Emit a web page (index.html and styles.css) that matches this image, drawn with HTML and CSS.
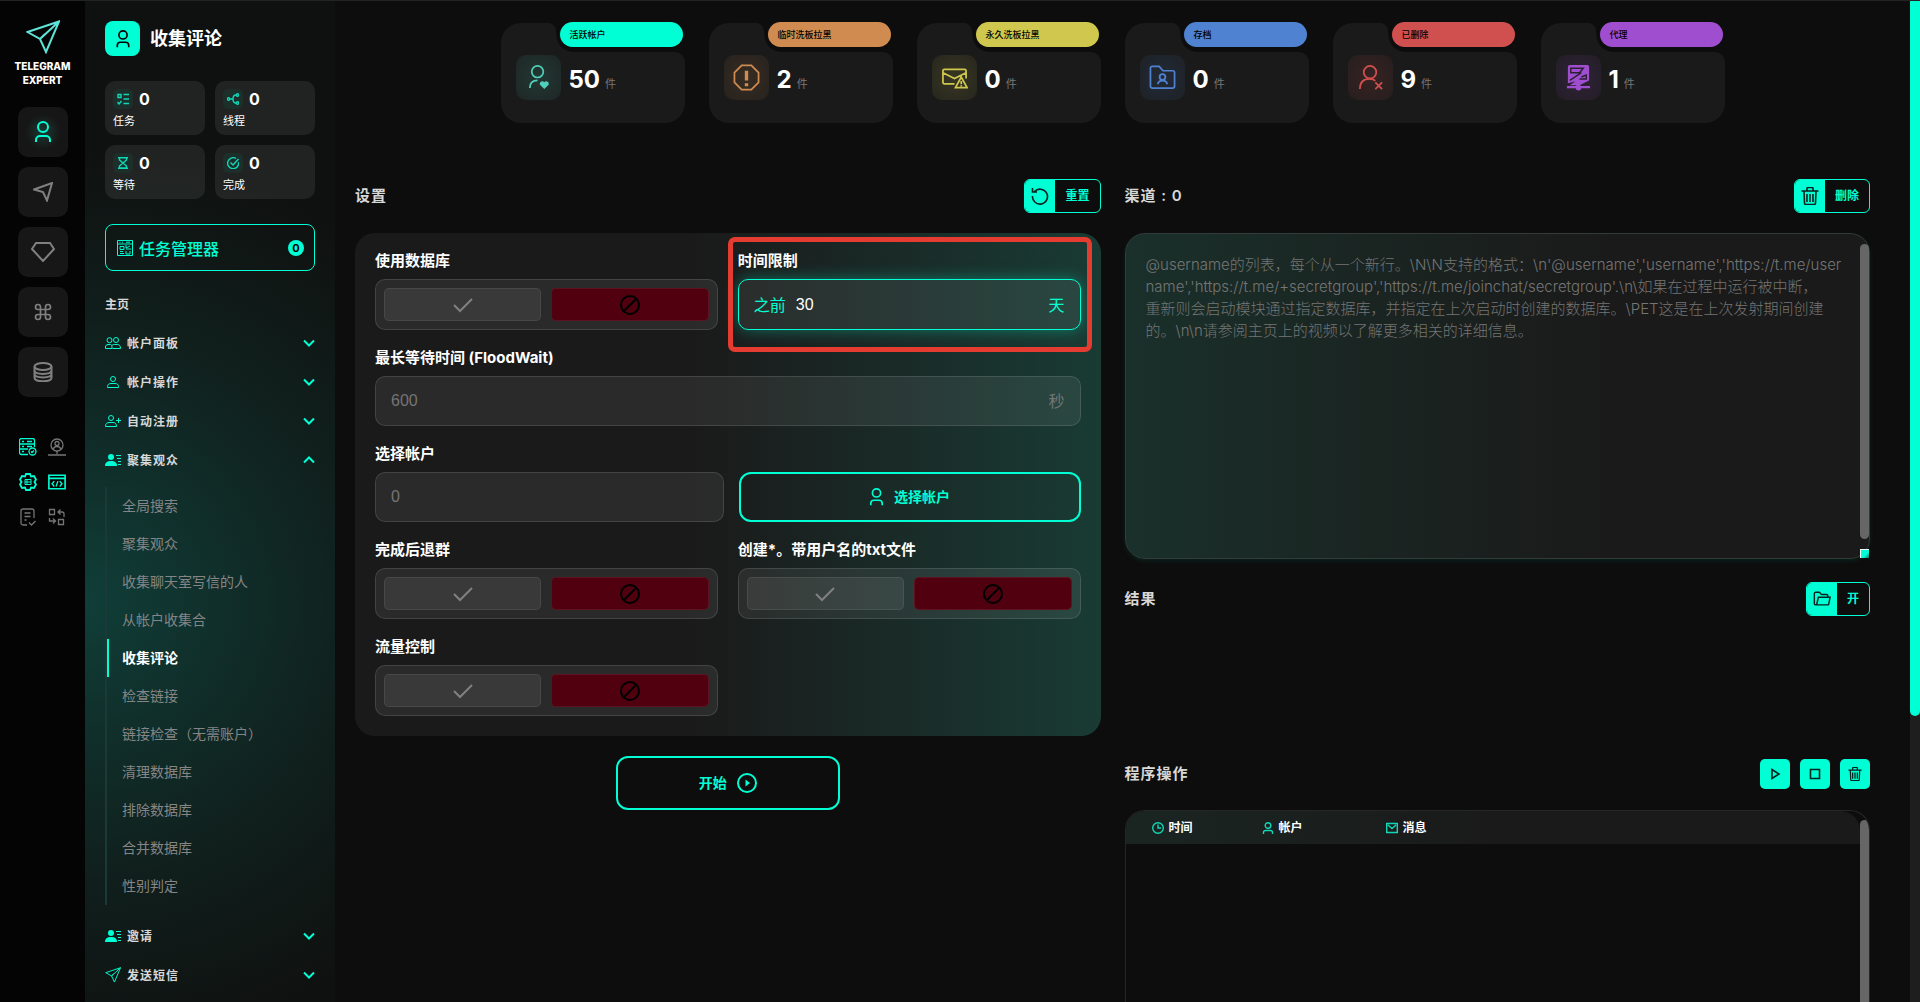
FILE: index.html
```html
<!DOCTYPE html>
<html lang="zh">
<head>
    <meta charset="UTF-8">
    <meta name="viewport" content="width=device-width, initial-scale=1.0">
    <title>收集评论</title>
    <link rel="stylesheet" href="styles.css">
</head>
<body>
    <svg class="sprite" aria-hidden="true">
        <symbol id="i-user" viewBox="0 0 16 22"><circle cx="8" cy="6" r="5"/><path d="M1 21v-2a4 4 0 0 1 4-4h6a4 4 0 0 1 4 4v2"/></symbol>
        <symbol id="i-user-sm" viewBox="0 0 16 12"><circle cx="8" cy="3" r="2.5"/><path d="M2.5 11.5v-1c0-2 1.500-3 3.500-3h4c2 0 3.500 1 3.500 3v1z"/></symbol>
        <symbol id="i-users" viewBox="0 0 16 12"><circle cx="4.500" cy="3.200" r="2.500"/><circle cx="11" cy="3" r="2.500"/><path d="M.5 11.500v-1.500c0-1.500 1-2.500 2.500-2.500h2.500c1 0 1.500 1 1.500 4zM7 8.500c1-1 1.500-1 2.500-1h3c2 0 3 1.500 3 4H7.500"/></symbol>
        <symbol id="i-user-plus" viewBox="0 0 16 12"><circle cx="6" cy="3" r="2.500"/><path d="M.5 11.500c0-3 1.500-4 3.500-4h4c2 0 3.500 1 3.500 4zM13.500 3v5M11 5.500h5"/></symbol>
        <symbol id="i-user-list" viewBox="0 0 16 12"><g fill="currentColor" stroke="none"><circle cx="6" cy="3" r="3"/><path d="M0 12c0-3.500 2-5 6-5s6 1.500 6 5z"/></g><path d="M11 1.500h5M12 4.500h4M13 7.500h3M13 10.500h3"/></symbol>
        <symbol id="i-plane" viewBox="0 0 34 34"><path d="M1.500 12L33 1.500 20 32l-6-13zM14 19L33 1.500M14 19l5-5"/></symbol>
        <symbol id="i-send" viewBox="0 0 20 20"><path d="M1 7.500L19 1l-5 17.500-4-8.500z"/></symbol>
        <symbol id="i-gem" viewBox="0 0 24 20"><path d="M5 1h14l4 6-11 12L1 7z"/></symbol>
        <symbol id="i-cmd" viewBox="0 0 24 24"><path d="M9 9h6v6H9zM9 9V6a3 3 0 1 0-3 3h3zM15 9V6a3 3 0 1 1 3 3h-3zM9 15v3a3 3 0 1 1-3-3h3zM15 15v3a3 3 0 1 0 3-3h-3z"/></symbol>
        <symbol id="i-db" viewBox="0 0 20 20"><ellipse cx="10" cy="4.500" rx="8.500" ry="3.500"/><path d="M1.500 4.500v11c0 5 17 5 17 0v-11M1.500 8.500c0 4.500 17 4.500 17 0M1.500 12c0 4.500 17 4.500 17 0"/></symbol>
        <symbol id="i-server" viewBox="0 0 18 18"><path d="M9 16.500H2.500a2 2 0 0 1-2-2v-12a2 2 0 0 1 2-2h11a2 2 0 0 1 2 2V9M1 6h14M1 11h8M3 3.500h2M8 3.500h5M3 8.500h2M8 8.500h5M3 13.500h2"/><circle cx="13.500" cy="13.500" r="3.500"/><path d="M12 13.500l1 1 2-2"/></symbol>
        <symbol id="i-netuser" viewBox="0 0 18 18"><circle cx="9" cy="7" r="6"/><circle cx="9" cy="5.500" r="2"/><path d="M5.500 11.500c0-4 7-4 7 0M9 13v3M0 17h18M8 17h2"/></symbol>
        <symbol id="i-gear" viewBox="0 0 18 18"><path d="M7 1h4l1 2.500 3-.5 2 3.500L15.500 9l1.500 2.500-2 3.500-3-.5-1 2.500H7l-1-2.500-3 .5-2-3.500L2.500 9 1 6.500 3 3l3 .5z"/><path d="M6 6.500h6v5H6zM6 9h6M8 6.500v5" stroke-width="1"/></symbol>
        <symbol id="i-code" viewBox="0 0 20 18"><path d="M1 1.500h18v15H1zM1 5h18"/><path d="M7 8L4.500 11 7 14M13 8l2.500 3L13 14M11 8l-2 6" stroke-width="1.500"/></symbol>
        <symbol id="i-doc" viewBox="0 0 18 18"><path d="M8 17H4a2 2 0 0 1-2-2V3a2 2 0 0 1 2-2h9a2 2 0 0 1 2 2v7M5.500 5h6M5.500 8.500h6M5.500 12h2M10 14.500l2.500 2.500 4-4"/></symbol>
        <symbol id="i-swap" viewBox="0 0 18 18"><path d="M1.500 1.500h5v5h-5zM10.500 11.500h5v5h-5zM10 4h4a2 2 0 0 1 2 2v3M12.500 1.500L10 4l2.500 2.500M1.500 10v3h6M5 10.500L7.500 13 5 15.500"/></symbol>
        <symbol id="i-list" viewBox="0 0 12 12"><path d="M1 1.500h3v3H1zM6.500 1.500H12M6.500 6H12M6.500 10.500H12M.5 9l1.500 2 2.500-3"/></symbol>
        <symbol id="i-branch" viewBox="0 0 12 12"><circle cx="1.500" cy="6" r="1.200"/><circle cx="10.500" cy="2" r="1.200"/><circle cx="10.500" cy="10" r="1.200"/><path d="M3 6h3M9 2C6 2 6 4 6 6s0 4 3 4"/></symbol>
        <symbol id="i-hour" viewBox="0 0 12 12"><path d="M1 .7h10M1 11.300h10M2.500 1v2L6 6l3.500-3V1M2.500 11V9L6 6l3.500 3v2z"/></symbol>
        <symbol id="i-done" viewBox="0 0 12 12"><path d="M11.500 5A5.500 5.500 0 1 1 9 1.500M3.500 5.500L6 8l5.500-6"/></symbol>
        <symbol id="i-tasks" viewBox="0 0 16 16"><path d="M.5.5h15v15H.5zM.5 4h15M2.500 2.200h1M5 2.200h1M9 2.200h4M3 6.500h4v3H3zM9 5v3l4-2M9 9h5M3 11.500h3M3 13.500h4M9 11v3h4v-3"/></symbol>
        <symbol id="i-down" viewBox="0 0 12 8"><path d="M1 1.500l5 5 5-5"/></symbol>
        <symbol id="i-up" viewBox="0 0 12 8"><path d="M1 6.500l5-5 5 5"/></symbol>
        <symbol id="i-heart-user" viewBox="0 0 28 28"><circle cx="13" cy="8" r="6"/><path d="M5 25c0-5 3-8 8-8"/><path d="M20 26l-4.500-4.500c-1-3 3-5 4.500-2.500 1.500-2.500 5.500-.5 4.500 2.500z" fill="currentColor" stroke="none"/></symbol>
        <symbol id="i-warn" viewBox="0 0 28 28"><path d="M9 1.500h10l7.500 7.500v10L19 26.500H9L1.500 19V9z"/><path d="M14 7v10M14 20v3" stroke-width="3.500"/></symbol>
        <symbol id="i-mail-warn" viewBox="0 0 28 28"><path d="M14 20.500H3.500a1.500 1.500 0 0 1-1.500-1.500V7a1.500 1.500 0 0 1 1.500-1.500h21A1.500 1.500 0 0 1 26 7v8M2 9l12 6 12-6M15 24.500h12l-6-11z"/><path d="M21 17.500v3.500M21 22v1.500"/></symbol>
        <symbol id="i-folder-user" viewBox="0 0 28 28"><path d="M1.500 23V4.500a2 2 0 0 1 2-2h7l4 4.500h10a2 2 0 0 1 2 2v14a2 2 0 0 1-2 2h-21a2 2 0 0 1-2-2z"/><circle cx="14" cy="13.500" r="3"/><path d="M9 21c1-5 9-5 10 0"/></symbol>
        <symbol id="i-user-x" viewBox="0 0 28 28"><circle cx="13.500" cy="8.500" r="6.500"/><path d="M3 26c0-7 4-10.500 10-10.500 2.500 0 4.500.5 6 2M19 19l7 7M26 19l-7 7"/></symbol>
        <symbol id="i-proxy" viewBox="0 0 28 28"><path d="M3 3a2 2 0 0 1 2-2h18a2 2 0 0 1 2 2v14l-10 5H5l6-4-8 2z" fill="currentColor" stroke="none"/><g stroke="#2b2035" stroke-width="1.500"><path d="M6 4.500h13l-4 4.500H6zM15 15.500h7v-4l-5 2M5 17L17 9"/></g><path d="M2 24h24M13 22v3" stroke-width="2.500"/><circle cx="14" cy="24.500" r="2" fill="currentColor"/></symbol>
        <symbol id="i-check" viewBox="0 0 22 16"><path d="M2 8l6 6L20 2"/></symbol>
        <symbol id="i-ban" viewBox="0 0 22 22"><circle cx="11" cy="11" r="9"/><path d="M4.700 17.300L17.300 4.700"/></symbol>
        <symbol id="i-reset" viewBox="0 0 18 18"><path d="M3.500 4.500A7.500 7.500 0 1 1 1.500 9M1.500 1v4h4.500"/></symbol>
        <symbol id="i-trash" viewBox="0 0 18 18"><path d="M.5 4h17M6 3.500V1.500a1 1 0 0 1 1-1h4a1 1 0 0 1 1 1v2M3 4.500l.5 11.500a1.500 1.500 0 0 0 1.500 1.500h8a1.500 1.500 0 0 0 1.500-1.500L15 4.500M6 7v8M9 7v8M12 7v8"/></symbol>
        <symbol id="i-folder" viewBox="0 0 20 18"><path d="M4 15.500H3A1.500 1.500 0 0 1 1.500 14V3A1.500 1.500 0 0 1 3 1.500h4L9.500 4H15a1.500 1.500 0 0 1 1.500 1.500V7M4 15.500L6 7h13l-1.500 7.500a1 1 0 0 1-1 1z"/></symbol>
        <symbol id="i-start" viewBox="0 0 20 20"><circle cx="10" cy="10" r="9"/><path d="M8.500 6.500v7l4.500-3.500z" fill="currentColor" stroke="none"/></symbol>
        <symbol id="i-play" viewBox="0 0 12 12"><path d="M3 1.500v9L10 6z"/></symbol>
        <symbol id="i-stop" viewBox="0 0 12 12"><path d="M1.500 1.500h9v9h-9z"/></symbol>
        <symbol id="i-clock" viewBox="0 0 12 12"><circle cx="6" cy="6" r="5.300"/><path d="M6 2.500V6h3"/></symbol>
        <symbol id="i-member" viewBox="0 0 12 12"><circle cx="6" cy="3.500" r="2.800"/><path d="M1.500 12v-1.500a2 2 0 0 1 2-2h5a2 2 0 0 1 2 2V12"/></symbol>
        <symbol id="i-mail" viewBox="0 0 12 12"><path d="M.7 1.500h10.600v9H.7zM2 3l4 3.500L10 3"/></symbol>
        <symbol id="card-shape" viewBox="0 0 184 100"><path d="M20 0h27a8 8 0 0 1 8 8c0 14 7 21 20 21h99a10 10 0 0 1 10 10v41a20 20 0 0 1-20 20H20a20 20 0 0 1-20-20V20A20 20 0 0 1 20 0z" fill="#1a1a1a" stroke="none"/></symbol>
    </svg>

    <aside class="rail">
        <svg class="icon logo"><use href="#i-plane"/></svg>
        <div class="brand">TELEGRAM<br>EXPERT</div>
        <nav class="rail-nav">
            <button class="rail-btn active" aria-label="账户"><svg class="icon rail-user"><use href="#i-user"/></svg></button>
            <button class="rail-btn" aria-label="发送"><svg class="icon"><use href="#i-send"/></svg></button>
            <button class="rail-btn" aria-label="高级"><svg class="icon rail-gem"><use href="#i-gem"/></svg></button>
            <button class="rail-btn" aria-label="命令"><svg class="icon"><use href="#i-cmd"/></svg></button>
            <button class="rail-btn" aria-label="数据库"><svg class="icon"><use href="#i-db"/></svg></button>
        </nav>
        <div class="rail-tools">
            <button class="tool on" aria-label="服务器"><svg class="icon"><use href="#i-server"/></svg></button>
            <button class="tool" aria-label="网络"><svg class="icon"><use href="#i-netuser"/></svg></button>
            <button class="tool on bold" aria-label="设置"><svg class="icon"><use href="#i-gear"/></svg></button>
            <button class="tool on bold" aria-label="代码"><svg class="icon"><use href="#i-code"/></svg></button>
            <button class="tool" aria-label="日志"><svg class="icon"><use href="#i-doc"/></svg></button>
            <button class="tool" aria-label="切换"><svg class="icon"><use href="#i-swap"/></svg></button>
        </div>
    </aside>

    <aside class="sidebar">
        <div class="page-title">
            <span class="title-icon"><svg class="icon"><use href="#i-user"/></svg></span>
            <h1>收集评论</h1>
        </div>

        <div class="counters">
            <div class="counter"><div class="counter-top"><span class="counter-icon"><svg class="icon"><use href="#i-list"/></svg></span><b>0</b></div><span>任务</span></div>
            <div class="counter"><div class="counter-top"><span class="counter-icon"><svg class="icon"><use href="#i-branch"/></svg></span><b>0</b></div><span>线程</span></div>
            <div class="counter"><div class="counter-top"><span class="counter-icon"><svg class="icon"><use href="#i-hour"/></svg></span><b>0</b></div><span>等待</span></div>
            <div class="counter"><div class="counter-top"><span class="counter-icon"><svg class="icon"><use href="#i-done"/></svg></span><b>0</b></div><span>完成</span></div>
        </div>

        <button class="task-manager">
            <svg class="icon"><use href="#i-tasks"/></svg>
            <span>任务管理器</span>
            <span class="task-count">0</span>
        </button>

        <nav class="menu">
            <a href="#" class="menu-home">主页</a>
            <a href="#" class="menu-item"><svg class="icon"><use href="#i-users"/></svg><span>帐户面板</span><svg class="icon arrow"><use href="#i-down"/></svg></a>
            <a href="#" class="menu-item"><svg class="icon"><use href="#i-user-sm"/></svg><span>帐户操作</span><svg class="icon arrow"><use href="#i-down"/></svg></a>
            <a href="#" class="menu-item"><svg class="icon"><use href="#i-user-plus"/></svg><span>自动注册</span><svg class="icon arrow"><use href="#i-down"/></svg></a>
            <a href="#" class="menu-item"><svg class="icon"><use href="#i-user-list"/></svg><span>聚集观众</span><svg class="icon arrow"><use href="#i-up"/></svg></a>
            <div class="submenu">
                <a href="#">全局搜索</a>
                <a href="#">聚集观众</a>
                <a href="#">收集聊天室写信的人</a>
                <a href="#">从帐户收集合</a>
                <a href="#" class="active">收集评论</a>
                <a href="#">检查链接</a>
                <a href="#">链接检查（无需账户）</a>
                <a href="#">清理数据库</a>
                <a href="#">排除数据库</a>
                <a href="#">合并数据库</a>
                <a href="#">性别判定</a>
            </div>
            <a href="#" class="menu-item"><svg class="icon"><use href="#i-user-list"/></svg><span>邀请</span><svg class="icon arrow"><use href="#i-down"/></svg></a>
            <a href="#" class="menu-item"><svg class="icon menu-plane"><use href="#i-plane"/></svg><span>发送短信</span><svg class="icon arrow"><use href="#i-down"/></svg></a>
        </nav>
    </aside>

    <main class="main">
        <section class="stats">
            <div class="stat green">
                <svg class="stat-shape"><use href="#card-shape"/></svg>
                <div class="stat-tag">活跃帐户</div>
                <div class="stat-body"><span class="stat-icon"><svg class="icon"><use href="#i-heart-user"/></svg></span><b>50</b><small>件</small></div>
            </div>
            <div class="stat orange">
                <svg class="stat-shape"><use href="#card-shape"/></svg>
                <div class="stat-tag">临时洗板拉黑</div>
                <div class="stat-body"><span class="stat-icon"><svg class="icon"><use href="#i-warn"/></svg></span><b>2</b><small>件</small></div>
            </div>
            <div class="stat yellow">
                <svg class="stat-shape"><use href="#card-shape"/></svg>
                <div class="stat-tag">永久洗板拉黑</div>
                <div class="stat-body"><span class="stat-icon"><svg class="icon"><use href="#i-mail-warn"/></svg></span><b>0</b><small>件</small></div>
            </div>
            <div class="stat blue">
                <svg class="stat-shape"><use href="#card-shape"/></svg>
                <div class="stat-tag">存档</div>
                <div class="stat-body"><span class="stat-icon"><svg class="icon"><use href="#i-folder-user"/></svg></span><b>0</b><small>件</small></div>
            </div>
            <div class="stat red">
                <svg class="stat-shape"><use href="#card-shape"/></svg>
                <div class="stat-tag">已删除</div>
                <div class="stat-body"><span class="stat-icon"><svg class="icon"><use href="#i-user-x"/></svg></span><b>9</b><small>件</small></div>
            </div>
            <div class="stat purple">
                <svg class="stat-shape"><use href="#card-shape"/></svg>
                <div class="stat-tag">代理</div>
                <div class="stat-body"><span class="stat-icon"><svg class="icon"><use href="#i-proxy"/></svg></span><b>1</b><small>件</small></div>
            </div>
        </section>

        <div class="columns">
            <section class="column">
                <div class="head">
                    <h2>设置</h2>
                    <button class="split-btn"><span class="split-icon"><svg class="icon"><use href="#i-reset"/></svg></span><span class="split-text">重置</span></button>
                </div>

                <form class="panel">
                    <div class="field">
                        <span class="label">使用数据库</span>
                        <div class="toggle">
                            <button type="button" class="yes" aria-label="是"><svg class="icon"><use href="#i-check"/></svg></button>
                            <button type="button" class="no" aria-label="否"><svg class="icon"><use href="#i-ban"/></svg></button>
                        </div>
                    </div>
                    <div class="field highlight">
                        <label class="label" for="days">时间限制</label>
                        <div class="box focused">
                            <span>之前</span>
                            <input id="days" type="text" value="30">
                            <span>天</span>
                        </div>
                    </div>
                    <div class="field wide">
                        <label class="label" for="flood">最长等待时间 (FloodWait)</label>
                        <div class="box">
                            <input id="flood" type="text" placeholder="600">
                            <span>秒</span>
                        </div>
                    </div>
                    <div class="field wide">
                        <label class="label" for="accounts">选择帐户</label>
                        <div class="account-row">
                            <div class="box"><input id="accounts" type="text" placeholder="0"></div>
                            <button type="button" class="outline-btn"><svg class="icon account-icon"><use href="#i-user"/></svg><span>选择帐户</span></button>
                        </div>
                    </div>
                    <div class="field">
                        <span class="label">完成后退群</span>
                        <div class="toggle">
                            <button type="button" class="yes" aria-label="是"><svg class="icon"><use href="#i-check"/></svg></button>
                            <button type="button" class="no" aria-label="否"><svg class="icon"><use href="#i-ban"/></svg></button>
                        </div>
                    </div>
                    <div class="field">
                        <span class="label">创建*。带用户名的txt文件</span>
                        <div class="toggle">
                            <button type="button" class="yes" aria-label="是"><svg class="icon"><use href="#i-check"/></svg></button>
                            <button type="button" class="no" aria-label="否"><svg class="icon"><use href="#i-ban"/></svg></button>
                        </div>
                    </div>
                    <div class="field">
                        <span class="label">流量控制</span>
                        <div class="toggle">
                            <button type="button" class="yes" aria-label="是"><svg class="icon"><use href="#i-check"/></svg></button>
                            <button type="button" class="no" aria-label="否"><svg class="icon"><use href="#i-ban"/></svg></button>
                        </div>
                    </div>
                </form>

                <button class="outline-btn start-btn"><span>开始</span><svg class="icon start-icon"><use href="#i-start"/></svg></button>
            </section>

            <section class="column">
                <div class="head">
                    <h2><label for="channels">渠道 : 0</label></h2>
                    <button class="split-btn"><span class="split-icon"><svg class="icon"><use href="#i-trash"/></svg></span><span class="split-text">删除</span></button>
                </div>
                <div class="channels">
                    <textarea id="channels" placeholder="@username的列表，每个从一个新行。\N\N支持的格式：\n'@username','username','https://t.me/user&#10;name','https://t.me/+secretgroup','https://t.me/joinchat/secretgroup'.\n\如果在过程中运行被中断，&#10;重新则会启动模块通过指定数据库，并指定在上次启动时创建的数据库。\PET这是在上次发射期间创建&#10;的。\n\n请参阅主页上的视频以了解更多相关的详细信息。"></textarea>
                    <div class="text-thumb"></div>
                    <div class="text-grip"></div>
                </div>

                <div class="head">
                    <h2>结果</h2>
                    <button class="split-btn"><span class="split-icon"><svg class="icon"><use href="#i-folder"/></svg></span><span class="split-text">开</span></button>
                </div>
                <div class="results"></div>

                <div class="head log-head">
                    <h2>程序操作</h2>
                    <div class="log-actions">
                        <button aria-label="播放"><svg class="icon"><use href="#i-play"/></svg></button>
                        <button aria-label="停止"><svg class="icon"><use href="#i-stop"/></svg></button>
                        <button aria-label="删除"><svg class="icon log-trash"><use href="#i-trash"/></svg></button>
                    </div>
                </div>
                <div class="log">
                    <table>
                        <thead>
                            <tr>
                                <th class="col-time"><svg class="icon"><use href="#i-clock"/></svg>时间</th>
                                <th class="col-account"><svg class="icon"><use href="#i-member"/></svg>帐户</th>
                                <th><svg class="icon"><use href="#i-mail"/></svg>消息</th>
                            </tr>
                        </thead>
                    </table>
                    <div class="log-thumb"></div>
                </div>
            </section>
        </div>
    </main>

    <div class="page-scroll"><div class="page-thumb"></div></div>
</body>
</html>
```

FILE: styles.css
```css
* {
    margin: 0;
    padding: 0;
    box-sizing: border-box;
}

:root {
    --accent: #00ffd5;
}

body {
    font-family: Inter, "Noto Sans CJK SC", sans-serif;
    height: 100vh;
    background: #0d0d0d;
    border-top: 1px solid #232323;
    color: #fff;
    display: flex;
    overflow: hidden;
}

button {
    font-family: inherit;
    border: none;
    background: none;
    cursor: pointer;
}

a {
    color: inherit;
    text-decoration: none;
}

.sprite {
    position: absolute;
    width: 0;
    height: 0;
}

.icon {
    display: block;
    flex-shrink: 0;
    width: 20px;
    height: 20px;
    fill: none;
    stroke: currentColor;
    stroke-width: 2;
}

/* left rail */
.rail {
    width: 85px;
    flex-shrink: 0;
    background: #040404;
    display: flex;
    flex-direction: column;
    align-items: center;
    padding-top: 19px;
}

.logo {
    width: 34px;
    height: 34px;
    color: #5fe3d8;
}

.brand {
    margin-top: 5px;
    font-size: 10px;
    font-weight: 800;
    line-height: 14px;
    text-align: center;
}

.rail-nav {
    margin-top: 20px;
    display: flex;
    flex-direction: column;
    gap: 10px;
}

.rail-btn {
    width: 50px;
    height: 50px;
    border-radius: 10px;
    background: #171717;
    color: #808080;
    display: flex;
    align-items: center;
    justify-content: center;
}

.rail-btn.active {
    color: var(--accent);
    background: radial-gradient(circle, #1b3a34, #161616 50%);
}

.rail-user {
    width: 16px;
    height: 22px;
}

.rail-gem {
    width: 24px;
}

.rail-tools {
    margin-top: 41px;
    display: grid;
    grid-template-columns: 18px 18px;
    column-gap: 11px;
    row-gap: 17px;
}

.tool {
    color: #757575;
}

.tool .icon {
    width: 18px;
    height: 18px;
    stroke-width: 1.3;
}

.tool.on {
    color: var(--accent);
}

.tool.bold .icon {
    stroke-width: 1.8;
}

/* sidebar */
.sidebar {
    width: 250px;
    flex-shrink: 0;
    padding: 20px;
    background: radial-gradient(circle at 0 600px, #103e38 0, #102d29 150px, #101f1c 280px, #0f1110 450px);
}

.page-title {
    display: flex;
    align-items: center;
    gap: 10px;
}

.page-title h1 {
    font-size: 18px;
    line-height: 24px;
}

.title-icon {
    width: 35px;
    height: 35px;
    border-radius: 8px;
    background: var(--accent);
    color: #000;
    display: flex;
    align-items: center;
    justify-content: center;
}

.title-icon .icon {
    width: 14px;
    height: 18px;
}

.counters {
    margin-top: 25px;
    display: grid;
    grid-template-columns: 1fr 1fr;
    gap: 10px;
    font-size: 11px;
    line-height: 16px;
}

.counter {
    height: 54px;
    padding: 8px;
    border-radius: 10px;
    background: rgba(255, 255, 255, 0.08);
}

.counter > span {
    display: block;
    margin-top: 4px;
}

.counter-top {
    display: flex;
    align-items: center;
    gap: 6px;
}

.counter-top b {
    font-size: 16px;
}

.counter-icon {
    width: 20px;
    height: 20px;
    border-radius: 5px;
    background: #1d2f2a;
    color: #10d8b7;
    display: flex;
    align-items: center;
    justify-content: center;
}

.counter-icon .icon {
    width: 12px;
    height: 12px;
    stroke-width: 1.4;
}

.task-manager {
    width: 100%;
    height: 47px;
    margin-top: 25px;
    padding: 0 10px 0 11px;
    border: 1px solid var(--accent);
    border-radius: 8px;
    color: var(--accent);
    font-size: 16px;
    font-weight: 500;
    display: flex;
    align-items: center;
    gap: 6px;
}

.task-manager .icon {
    width: 16px;
    height: 16px;
    stroke-width: 1;
}

.task-count {
    width: 16px;
    height: 16px;
    margin-left: auto;
    border-radius: 50%;
    background: var(--accent);
    color: #000;
    font-size: 11px;
    font-weight: 700;
    line-height: 16px;
}

.menu {
    margin-top: 15px;
    font-size: 12px;
    font-weight: 700;
    color: #d8d8d8;
}

.menu-home {
    display: block;
    line-height: 37px;
}

.menu-item {
    height: 39px;
    display: flex;
    align-items: center;
    gap: 6px;
    letter-spacing: 1px;
}

.menu-item .icon {
    width: 16px;
    height: 14px;
    color: var(--accent);
    stroke-width: 1;
}

.menu-item .menu-plane {
    height: 16px;
    stroke-width: 2;
}

.menu-item .arrow {
    width: 12px;
    height: 8px;
    margin-left: auto;
    stroke-width: 2;
}

.submenu {
    margin: 8px 0 11px;
    border-left: 2px solid #1b3a35;
    font-size: 14px;
    font-weight: 400;
    color: #858585;
}

.submenu a {
    display: block;
    height: 38px;
    line-height: 38px;
    padding-left: 13px;
    border-left: 2px solid transparent;
}

.submenu a.active {
    border-color: var(--accent);
    color: #fff;
    font-weight: 700;
}

/* main area */
.main {
    flex: 1;
    min-width: 0;
    padding: 22px 40px 0 20px;
    display: flex;
    flex-direction: column;
}

.stats {
    display: flex;
    justify-content: center;
    gap: 24px;
}

.stat {
    position: relative;
    width: 184px;
    height: 100px;
    padding: 32px 15px 0;
    color: var(--c);
}

.green { --c: #00ffd5; }
.orange { --c: #d08c50; }
.yellow { --c: #d0c84e; }
.blue { --c: #4f82d0; }
.red { --c: #d05050; }
.purple { --c: #a04ed0; }

.stat-shape {
    position: absolute;
    top: 0;
    left: 0;
    width: 100%;
    height: 100%;
}

.stat-tag {
    position: absolute;
    top: -1px;
    right: 2px;
    width: 123px;
    height: 25px;
    padding-left: 10px;
    border-radius: 13px;
    background: var(--c);
    color: #000;
    font-size: 9px;
    font-weight: 500;
    line-height: 25px;
}

.stat-body {
    position: relative;
    display: flex;
    align-items: center;
}

.stat-icon {
    width: 45px;
    height: 45px;
    border-radius: 10px;
    background: radial-gradient(circle, color-mix(in srgb, currentColor 16%, #1a1a1a), color-mix(in srgb, currentColor 7%, #1a1a1a));
    display: flex;
    align-items: center;
    justify-content: center;
}

.green .stat-icon {
    color: #4fd0b8;
}

.stat-icon .icon {
    width: 27px;
    height: 27px;
    stroke-width: 1.8;
}

.stat-body b {
    margin: 5px 5px 0 8px;
    font-size: 24px;
    line-height: 28px;
    color: #fff;
}

.stat-body small {
    margin-top: 12px;
    font-size: 11px;
    line-height: 16px;
    color: #777;
}

.columns {
    flex: 1;
    margin-top: 56px;
    display: grid;
    grid-template-columns: 1fr 1fr;
    gap: 24px;
}

.column {
    min-width: 0;
    display: flex;
    flex-direction: column;
}

.head {
    height: 34px;
    flex-shrink: 0;
    display: flex;
    align-items: center;
    justify-content: space-between;
}

.head h2 {
    font-size: 15px;
    line-height: 20px;
    font-weight: 600;
    letter-spacing: 1px;
    color: #d8d8d8;
}

.split-btn {
    height: 34px;
    border: 1px solid var(--accent);
    border-radius: 6px;
    overflow: hidden;
    color: var(--accent);
    display: flex;
    align-items: stretch;
}

.split-icon {
    width: 30px;
    background: var(--accent);
    color: #06231e;
    display: flex;
    align-items: center;
    justify-content: center;
}

.split-icon .icon {
    width: 18px;
    height: 18px;
    stroke-width: 1.6;
}

.split-text {
    padding: 0 10px;
    font-size: 12px;
    font-weight: 700;
    line-height: 32px;
}

/* settings form */
.panel {
    margin-top: 20px;
    padding: 20px;
    border-radius: 20px;
    background: linear-gradient(to right, #1a1a1a 45%, #193b34);
    display: grid;
    grid-template-columns: 1fr 1fr;
    gap: 20px;
}

.wide {
    grid-column: span 2;
}

.label {
    display: block;
    margin-bottom: 10px;
    font-size: 15px;
    font-weight: 700;
    line-height: 16px;
}

.highlight {
    position: relative;
}

.highlight::after {
    content: "";
    position: absolute;
    inset: -16px -11px -22px -10px;
    border: 5px solid #e53c31;
    border-radius: 7px;
    pointer-events: none;
}

.toggle,
.box {
    height: 51px;
    border: 1px solid rgba(255, 255, 255, 0.12);
    border-radius: 10px;
    background: rgba(255, 255, 255, 0.07);
    display: flex;
}

.wide .box {
    height: 50px;
}

.toggle {
    padding: 8px;
    gap: 10px;
}

.toggle button {
    flex: 1;
    border: 1px solid rgba(255, 255, 255, 0.08);
    border-radius: 5px;
    background: rgba(255, 255, 255, 0.07);
    color: #808080;
    display: flex;
    align-items: center;
    justify-content: center;
}

.toggle button.no {
    background: #50000e;
    color: #000;
}

.toggle .icon {
    width: 22px;
    height: 22px;
}

.box {
    align-items: center;
    gap: 10px;
    padding: 0 15px;
    font-size: 16px;
    line-height: 22px;
    color: #757575;
}

.box input {
    flex: 1;
    min-width: 0;
    border: none;
    outline: none;
    background: none;
    color: #fff;
    font-family: "Liberation Sans", sans-serif;
    font-size: 16px;
}

.box input::placeholder {
    color: #757575;
}

.box.focused {
    border-color: var(--accent);
    box-shadow: 0 0 15px rgba(0, 255, 213, 0.35);
    color: var(--accent);
}

.account-row {
    display: grid;
    grid-template-columns: 51fr 50fr;
    gap: 15px;
}

.outline-btn {
    border: 2px solid var(--accent);
    border-radius: 12px;
    color: var(--accent);
    font-size: 14px;
    line-height: 20px;
    font-weight: 700;
    display: flex;
    align-items: center;
    justify-content: center;
    gap: 10px;
}

.account-icon {
    width: 15px;
    height: 18px;
}

.start-btn {
    width: 224px;
    height: 54px;
    margin: 20px auto 0;
}

.start-icon {
    width: 20px;
    height: 20px;
}

/* right column */
.channels {
    position: relative;
    height: 326px;
    margin: 20px 0 23px;
    flex-shrink: 0;
}

.channels textarea {
    display: block;
    width: 100%;
    height: 100%;
    padding: 20px 18px 0 20px;
    border: 1px solid #333a38;
    border-radius: 20px;
    outline: none;
    resize: none;
    overflow: hidden;
    background: linear-gradient(to right, #1a302a, #1a1a1a 65%);
    box-shadow: 0 2px 4px rgba(0, 80, 65, 0.3);
    color: #fff;
    font-family: Inter, "Noto Sans CJK SC", sans-serif;
    font-size: 15px;
    font-weight: 300;
    line-height: 22px;
}

.channels textarea::placeholder {
    color: #757575;
}

.text-thumb {
    position: absolute;
    top: 11px;
    right: 1px;
    bottom: 20px;
    width: 9px;
    border-radius: 5px;
    background: #666;
}

.text-grip {
    position: absolute;
    right: 1px;
    bottom: 1px;
    width: 9px;
    height: 9px;
    border: 1px solid #e8fffb;
    border-width: 1px 0 0 1px;
    background: linear-gradient(135deg, var(--accent) 60%, #1a6b5d);
}

.results {
    height: 143px;
    flex-shrink: 0;
}

.log-head {
    height: 30px;
}

.log-actions {
    display: flex;
    gap: 10px;
}

.log-actions button {
    width: 30px;
    height: 30px;
    border-radius: 5px;
    background: var(--accent);
    color: #00241d;
    display: flex;
    align-items: center;
    justify-content: center;
}

.log-actions .icon {
    width: 12px;
    height: 12px;
    stroke-width: 1.6;
}

.log-actions .log-trash {
    width: 14px;
    height: 14px;
}

.log {
    position: relative;
    flex: 1;
    margin-top: 21px;
    padding-right: 9px;
    border: 1px solid #262626;
    border-bottom: none;
    border-radius: 20px 20px 0 0;
    overflow: hidden;
}

.log table {
    width: 100%;
    border-collapse: collapse;
    border-radius: 0 20px 0 0;
    background: linear-gradient(to right, #1a2522, #1a1a1a 50%);
}

.log th {
    height: 33px;
    font-size: 12px;
    line-height: 18px;
    text-align: left;
}

.log th .icon {
    display: inline-block;
    width: 12px;
    height: 12px;
    margin-right: 5px;
    vertical-align: -2px;
    color: #10d8b7;
    stroke-width: 1.4;
}

.log .col-time {
    width: 136px;
    padding-left: 26px;
}

.log .col-account {
    width: 124px;
}

.log-thumb {
    position: absolute;
    top: 9px;
    right: 0;
    bottom: 0;
    width: 9px;
    border-radius: 5px 5px 0 0;
    background: #666;
}

.page-scroll {
    width: 10px;
    flex-shrink: 0;
    margin-top: -1px;
    background: #1e1e1e;
}

.page-thumb {
    width: 10px;
    height: 716px;
    border-radius: 0 0 5px 5px;
    background: var(--accent);
}
```
